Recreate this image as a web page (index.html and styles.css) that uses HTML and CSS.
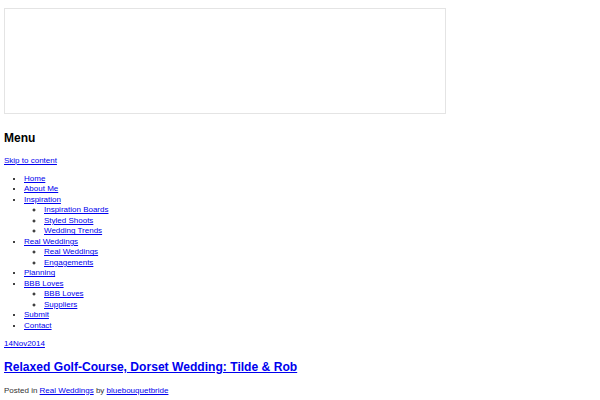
FILE: index.html
```html
<!DOCTYPE html>
<html lang="en">
<head>
    <meta charset="UTF-8">
    <meta name="viewport" content="width=device-width, initial-scale=1.0">
    <title>Blue Bouquet Bride</title>
    <link rel="stylesheet" href="styles.css">
</head>
<body>
    <div class="banner"></div>
    <nav class="site-nav">
        <h2 class="menu-title">Menu</h2>
        <a class="skip-link" href="#content">Skip to content</a>
        <ul class="menu">
            <li><a href="#">Home</a></li>
            <li><a href="#">About Me</a></li>
            <li><a href="#">Inspiration</a>
                <ul>
                    <li><a href="#">Inspiration Boards</a></li>
                    <li><a href="#">Styled Shoots</a></li>
                    <li><a href="#">Wedding Trends</a></li>
                </ul>
            </li>
            <li><a href="#">Real Weddings</a>
                <ul>
                    <li><a href="#">Real Weddings</a></li>
                    <li><a href="#">Engagements</a></li>
                </ul>
            </li>
            <li><a href="#">Planning</a></li>
            <li><a href="#">BBB Loves</a>
                <ul>
                    <li><a href="#">BBB Loves</a></li>
                    <li><a href="#">Suppliers</a></li>
                </ul>
            </li>
            <li><a href="#">Submit</a></li>
            <li><a href="#">Contact</a></li>
        </ul>
    </nav>
    <article id="content" class="post">
        <a class="post-date" href="#">14Nov2014</a>
        <h1 class="post-title"><a href="#">Relaxed Golf-Course, Dorset Wedding: Tilde &amp; Rob</a></h1>
        <p class="post-meta">Posted in <a href="#">Real Weddings</a> by <a href="#">bluebouquetbride</a></p>
    </article>
</body>
</html>
```

FILE: styles.css
```css
body {
    margin: 4px;
    font-family: "Liberation Sans", Arial, sans-serif;
    font-size: 8px;
    line-height: 1.3;
    color: #000;
}
a {
    color: #0000ee;
}
.banner {
    width: 440px;
    height: 104px;
    margin-top: 4px;
    border: 1px solid #e4e4e4;
}
.menu-title {
    font-size: 12px;
    margin: 17px 0 9px;
}
.skip-link {
    display: block;
}
.menu {
    margin: 8px 0;
    padding-left: 20px;
    line-height: 10.5px;
}
.menu ul {
    margin: 0;
    padding-left: 20px;
    list-style: circle;
}
.post {
    margin-top: 8px;
}
.post-date {
    display: block;
}
.post-title {
    font-size: 12.1px;
    margin: 10px 0;
}
.post-meta {
    color: #333;
    margin: 7px 0;
}
```
